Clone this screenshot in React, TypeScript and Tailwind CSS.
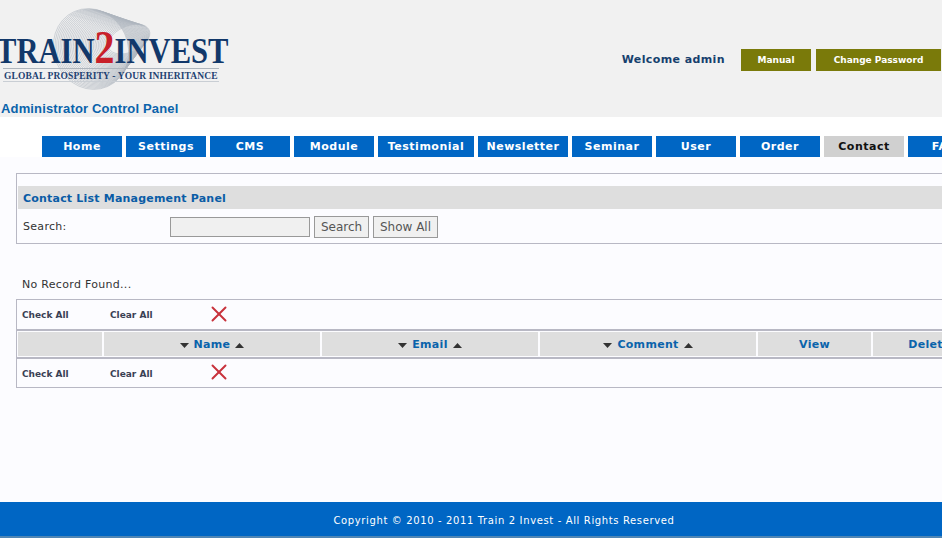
import { X } from 'lucide-react';

const navItems = ['Home', 'Settings', 'CMS', 'Module', 'Testimonial', 'Newsletter', 'Seminar', 'User', 'Order', 'Contact', 'FAQs'];
const font = 'font-["DejaVu_Sans",Verdana,sans-serif]';

function navWidth(item: string) {
  if (item === 'Testimonial') return 'w-[96px]';
  if (item === 'Newsletter') return 'w-[90px]';
  return 'w-[80px]';
}

function Logo() {
  const rings = Array.from({ length: 34 }, (_, i) => i);
  return (
    <div className="relative h-[93px] w-[232px] overflow-hidden">
      <svg className="absolute left-0 top-0" width="232" height="93" viewBox="0 0 232 93" fill="none">
        <g stroke="#aeb5bd" strokeWidth="0.5">
          {rings.map((i) => (
            <ellipse
              key={i}
              cx={91 + i * 1.15}
              cy={42 - i * 0.3}
              rx={37 - i * 0.45}
              ry={41 - i * 0.85}
              transform={`rotate(-24 ${91 + i * 1.15} ${42 - i * 0.3})`}
            />
          ))}
        </g>
      </svg>
      <div className="absolute left-[-4px] top-[18px] flex origin-left scale-x-[0.85] items-baseline whitespace-nowrap font-['Liberation_Serif',serif] text-[36px] leading-[44px] font-bold text-[#12386a]">
        <span>TRAIN</span>
        <span className="text-[47px] leading-[44px] text-[#c8202a]">2</span>
        <span>INVEST</span>
      </div>
      <div className="absolute left-[3px] top-[61px] h-[1px] w-[216px] bg-[#aeb5bd]" />
      <div className="absolute left-[4px] top-[63px] whitespace-nowrap font-['Liberation_Serif',serif] text-[9.5px] leading-[12px] font-bold tracking-[0.14px] text-[#1f4272]">
        GLOBAL PROSPERITY - YOUR INHERITANCE
      </div>
      <div className="absolute left-[3px] top-[74px] h-[1px] w-[216px] bg-[#c9ced4]" />
    </div>
  );
}

function Arrow({ up }: { up?: boolean }) {
  return (
    <svg width="9" height="5" viewBox="0 0 10 6" preserveAspectRatio="none" fill="#333">
      <path d={up ? 'M5 0 L10 6 L0 6 Z' : 'M0 0 L10 0 L5 6 Z'} />
    </svg>
  );
}

function HeadCell({ label, width, sort }: { label: string; width: string; sort?: boolean }) {
  return (
    <div className={`${width} flex h-[24px] shrink-0 items-center justify-center gap-[5px] bg-[#dedede] pt-[2px] text-[11px] font-bold tracking-[0.3px] text-[#0a63ab]`}>
      {sort && <Arrow />}
      <span>{label}</span>
      {sort && <Arrow up />}
    </div>
  );
}

function ActionRow({ height, textPad }: { height: string; textPad: string }) {
  return (
    <div className={`${height} flex items-center text-[9px] font-bold text-[#3a4054]`}>
      <span className={`${textPad} ml-[5px] w-[88px]`}>Check All</span>
      <span className={`${textPad} w-[96px]`}>Clear All</span>
      <X size={26} strokeWidth={1.8} className="mt-[-2px] shrink-0 text-[#c8323c]" />
    </div>
  );
}

export default function App() {
  return (
    <div className={`${font} flex h-[538px] w-[942px] flex-col overflow-hidden bg-[#fcfcff]`}>
      {/* header */}
      <div className="flex h-[117px] shrink-0 justify-between bg-[#f1f1f1]">
        <div>
          <div className="h-[7px]" />
          <Logo />
          <div className="ml-[1px] mt-[1px] font-['Liberation_Sans',sans-serif] text-[13px] leading-[16px] font-bold tracking-[0.15px] text-[#0a63ab]">
            Administrator Control Panel
          </div>
        </div>
        <div className="mr-[1px] mt-[49px] flex h-[22px] items-center whitespace-nowrap">
          <span className="mr-[16px] pt-[1px] text-[11px] font-bold tracking-[0.4px] text-[#163f6e]">Welcome admin</span>
          <div className="flex h-[22px] w-[70px] items-center justify-center bg-[#7a7a0a] pt-[2px] text-[9px] font-bold text-white">Manual</div>
          <div className="ml-[5px] flex h-[22px] w-[125px] items-center justify-center bg-[#7a7a0a] pt-[2px] text-[9px] font-bold text-white">Change Password</div>
        </div>
      </div>

      {/* nav */}
      <div className="flex h-[40px] shrink-0 items-start gap-[4px] bg-white pl-[42px] pt-[19px]">
        {navItems.map((item) => (
          <div
            key={item}
            className={`${navWidth(item)} flex h-[21px] shrink-0 items-center justify-center pt-[2px] text-[11px] font-bold tracking-[0.5px] whitespace-nowrap ${
              item === 'Contact' ? 'bg-[#d0d0d0] text-[#111]' : 'bg-[#0066c4] text-white'
            }`}
          >
            {item}
          </div>
        ))}
      </div>

      {/* search panel */}
      <div className="ml-[16px] mt-[16px] h-[71px] w-[960px] shrink-0 border border-[#b8b8c4] pl-[1px] pt-[12px]">
        <div className="flex h-[23px] items-center bg-[#dedede] pl-[5px] pt-[3px] text-[11px] font-bold tracking-[0.2px] text-[#0a5ca6]">
          Contact List Management Panel
        </div>
        <div className="mt-[7px] flex items-center text-[11px] tracking-[0.3px] text-[#333]">
          <span className="ml-[5px] w-[147px] pt-[1px]">Search:</span>
          <div className="mt-[-1px] h-[20px] w-[140px] border border-[#999] bg-[#f0f0f0]" />
          <div className="ml-[4px] flex h-[22px] w-[55px] items-center justify-center border border-[#999] bg-[#f0f0f0] text-[12px] tracking-normal text-[#555]">Search</div>
          <div className="ml-[4px] flex h-[22px] w-[65px] items-center justify-center border border-[#999] bg-[#f0f0f0] text-[12px] tracking-normal text-[#555]">Show All</div>
        </div>
      </div>

      <div className="ml-[22px] mt-[34px] h-[14px] shrink-0 text-[11px] leading-[14px] tracking-[0.3px] text-[#333]">No Record Found...</div>

      {/* list */}
      <div className="ml-[16px] mt-[7px] w-[960px] shrink-0 border border-[#b8b8c4]">
        <ActionRow height="h-[29px]" textPad="pt-[2px]" />
        <div className="flex gap-[2px] border-y-[2px] border-[#b8b8c4] px-[1px] py-[1px]">
          <HeadCell label="" width="w-[84px]" />
          <HeadCell label="Name" width="w-[216px]" sort />
          <HeadCell label="Email" width="w-[216px]" sort />
          <HeadCell label="Comment" width="w-[216px]" sort />
          <HeadCell label="View" width="w-[113px]" />
          <HeadCell label="Delete" width="w-[113px]" />
        </div>
        <ActionRow height="h-[28px]" textPad="pt-[4px]" />
      </div>

      {/* footer */}
      <div className="mt-auto flex h-[36px] shrink-0 items-center justify-center border-b-2 border-[#4f86b5] bg-[#0066c4] pl-[66px] pt-[2px] text-[10px] tracking-[0.63px] text-white">
        Copyright © 2010 - 2011 Train 2 Invest - All Rights Reserved
      </div>
    </div>
  );
}
